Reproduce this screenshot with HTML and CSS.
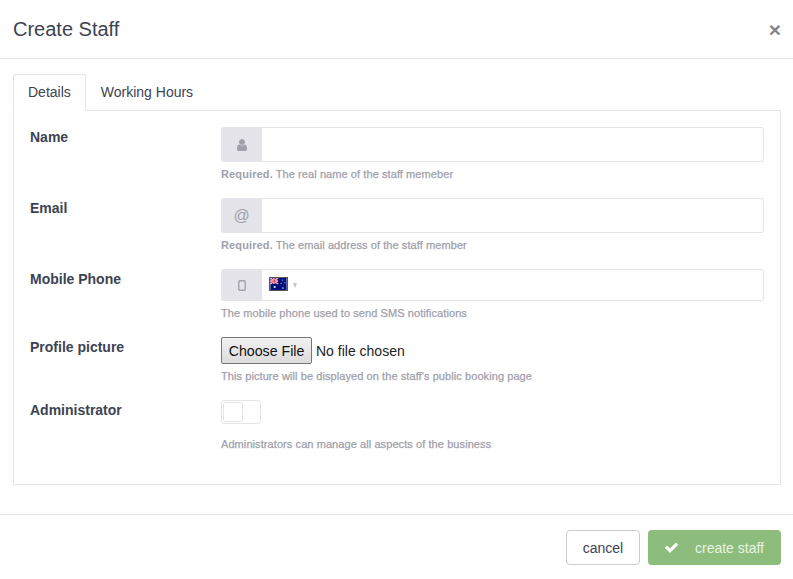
FILE: index.html
```html
<!DOCTYPE html>
<html lang="en">
<head>
<meta charset="utf-8">
<title>Create Staff</title>
<link rel="stylesheet" href="styles.css">
</head>
<body>
<div class="modal">
  <header class="modal-header">
    <h1 class="modal-title">Create Staff</h1>
    <span class="close">×</span>
  </header>
  <main class="modal-body">
    <nav class="tabs">
      <a class="tab tab-active">Details</a>
      <a class="tab">Working Hours</a>
    </nav>
    <form class="panel">
      <div class="row">
        <label class="row-label">Name</label>
        <div class="row-field">
          <div class="input-group">
            <span class="addon">
              <svg class="icon-user" viewBox="0 0 1792 1792"><path d="M1536 1399q0 109-62.5 187t-150.5 78h-854q-88 0-150.5-78t-62.5-187q0-85 8.5-160.5t31.5-152 58.5-131 94-89 134.5-34.5q131 128 313 128t313-128q76 0 134.5 34.5t94 89 58.5 131 31.5 152 8.5 160.5zm-256-887q0 159-112.5 271.5t-271.5 112.5-271.5-112.5-112.5-271.5 112.5-271.5 271.5-112.5 271.5 112.5 112.5 271.5z"/></svg>
            </span>
            <span class="input"></span>
          </div>
          <p class="help"><strong class="help-strong">Required.</strong> The real name of the staff memeber</p>
        </div>
      </div>
      <div class="row">
        <label class="row-label">Email</label>
        <div class="row-field">
          <div class="input-group">
            <span class="addon addon-at">@</span>
            <span class="input"></span>
          </div>
          <p class="help"><strong class="help-strong">Required.</strong> The email address of the staff member</p>
        </div>
      </div>
      <div class="row">
        <label class="row-label">Mobile Phone</label>
        <div class="row-field">
          <div class="input-group input-group-phone">
            <span class="addon">
              <svg class="icon-mobile" viewBox="0 0 8 11"><rect x="0.8" y="0.7" width="6.4" height="9.6" rx="1.2"/></svg>
            </span>
            <span class="input input-phone">
              <svg class="flag" viewBox="0 0 19 14">
                <rect width="19" height="14" fill="#00107a"/>
                <path d="M0 0L9 7M9 0L0 7" stroke="#fff" stroke-width="1.6"/>
                <path d="M0 0L9 7M9 0L0 7" stroke="#d8203a" stroke-width="0.6"/>
                <path d="M4.5 0V7M0 3.5H9" stroke="#fff" stroke-width="2.4"/>
                <path d="M4.5 0V7M0 3.5H9" stroke="#d8203a" stroke-width="1.2"/>
                <g fill="#fff">
                  <rect x="4" y="9.5" width="2" height="2"/>
                  <rect x="14" y="2" width="1" height="1"/>
                  <rect x="16.5" y="5" width="1" height="1"/>
                  <rect x="12" y="6" width="1" height="1"/>
                  <rect x="14" y="11" width="1.4" height="1.4"/>
                </g>
              </svg>
              <span class="flag-arrow"></span>
            </span>
          </div>
          <p class="help">The mobile phone used to send SMS notifications</p>
        </div>
      </div>
      <div class="row">
        <label class="row-label">Profile picture</label>
        <div class="row-field">
          <input class="file" type="file">
          <p class="help">This picture will be displayed on the staff's public booking page</p>
        </div>
      </div>
      <div class="row">
        <label class="row-label">Administrator</label>
        <div class="row-field">
          <div class="toggle"><span class="toggle-knob"></span></div>
          <p class="help help-toggle">Administrators can manage all aspects of the business</p>
        </div>
      </div>
    </form>
  </main>
  <footer class="modal-footer">
    <button class="btn btn-cancel" type="button">cancel</button>
    <button class="btn btn-create" type="button">
      <svg class="icon-check" viewBox="0 0 1792 1792"><path d="M1671 566q0 40-28 68l-724 724-136 136q-28 28-68 28t-68-28l-136-136-362-362q-28-28-28-68t28-68l136-136q28-28 68-28t68 28l294 295 656-657q28-28 68-28t68 28l136 136q28 28 28 68z"/></svg>
      <span>create staff</span>
    </button>
  </footer>
</div>
</body>
</html>
```

FILE: styles.css
```css
* { box-sizing: border-box; }
html, body { margin: 0; padding: 0; background: #fff; }
body {
  font-family: "Liberation Sans", Arial, sans-serif;
  font-size: 14px;
  color: #3c4353;
}
.modal { width: 793px; height: 579px; overflow: hidden; }

.modal-header {
  height: 59px;
  padding: 0 12px 0 13px;
  border-bottom: 1px solid #e5e5e9;
  display: flex;
  align-items: center;
  justify-content: space-between;
}
.modal-title { margin: 0; font-size: 20px; font-weight: 400; line-height: 58px; }
.close { font-size: 21px; font-weight: 700; line-height: 1; color: #85858a; margin-top: 1px; }

.modal-body { padding: 15px 12px 29px 13px; }

.tabs { display: flex; height: 37px; margin-bottom: -1px; position: relative; }
.tab {
  height: 37px;
  padding: 0 14px;
  line-height: 35px;
  border: 1px solid transparent;
  border-radius: 3px 3px 0 0;
}
.tab-active {
  border-color: #e5e5e9;
  border-bottom-color: #fff;
  background: #fff;
}

.panel {
  height: 375px;
  border: 1px solid #e5e5e9;
  padding: 16px;
}
.row { display: flex; margin-bottom: 17px; }
.row-label { flex: 0 0 191px; font-weight: 700; font-size: 14px; line-height: 20px; }
.row-field { flex: 1; min-width: 0; }

.input-group { display: flex; height: 35px; }
.input-group-phone { height: 32px; }
.addon {
  flex: 0 0 41px;
  background: #e4e4ea;
  border-radius: 3px 0 0 3px;
  display: flex;
  align-items: center;
  justify-content: center;
  color: #a0a0ab;
}
.addon-at { font-size: 16px; }
.input {
  flex: 1;
  background: #fff;
  border: 1px solid #e5e5e9;
  border-left: 0;
  border-radius: 0 3px 3px 0;
}
.input-phone { display: flex; align-items: center; padding-left: 7px; }

.icon-user { width: 14px; height: 14px; fill: #a0a0ab; }
.icon-mobile { width: 8px; height: 11px; fill: none; stroke: #a0a0ab; stroke-width: 1.4; }
.flag { width: 19px; height: 14px; border: 1px solid #555; margin-top: -2px; }
.flag-arrow {
  width: 0;
  height: 0;
  margin-left: 5px;
  border-left: 2.5px solid transparent;
  border-right: 2.5px solid transparent;
  border-top: 5px solid #c4c4c8;
}

.help {
  margin: 5px 0 0;
  font-size: 11px;
  line-height: 14px;
  font-weight: 400;
  letter-spacing: 0.08px;
  color: #a0a0ab;
  -webkit-text-stroke: 0.25px #a0a0ab;
}
.help-strong { font-weight: 700; -webkit-text-stroke: 0; letter-spacing: 0.12px; }
.help-toggle { margin-top: 13px; }

.file { display: block; height: 27px; font: 14px "Liberation Sans", Arial, sans-serif; color: #222; }
.file::file-selector-button {
  height: 27px;
  width: 91px;
  padding: 0;
  margin-right: 4px;
  font: 14.2px "Liberation Sans", Arial, sans-serif;
  color: #111;
  background: linear-gradient(#f1f1f1, #dcdcdc);
  border: 1px solid #767676;
  border-radius: 2px;
}

.toggle {
  width: 40px;
  height: 24px;
  border: 1px solid #e5e5e9;
  border-radius: 3px;
  padding: 1px;
}
.toggle-knob {
  display: block;
  width: 20px;
  height: 20px;
  border: 1px solid #e5e5e9;
  border-radius: 2px;
}

.modal-footer {
  height: 65px;
  border-top: 1px solid #e5e5e9;
  padding: 15px 12px 14px 0;
  display: flex;
  justify-content: flex-end;
  gap: 8px;
}
.btn {
  height: 35px;
  font: 14px "Liberation Sans", Arial, sans-serif;
  border-radius: 4px;
  padding: 0;
  display: flex;
  align-items: center;
  justify-content: center;
}
.btn-cancel { width: 74px; background: #fff; border: 1px solid #cccccc; color: #3c4353; }
.btn-create { width: 133px; background: #8cbd7c; border: 0; color: #e9f3e5; gap: 16px; padding-right: 1px; }
.icon-check { width: 15px; height: 15px; fill: #fff; }
```
